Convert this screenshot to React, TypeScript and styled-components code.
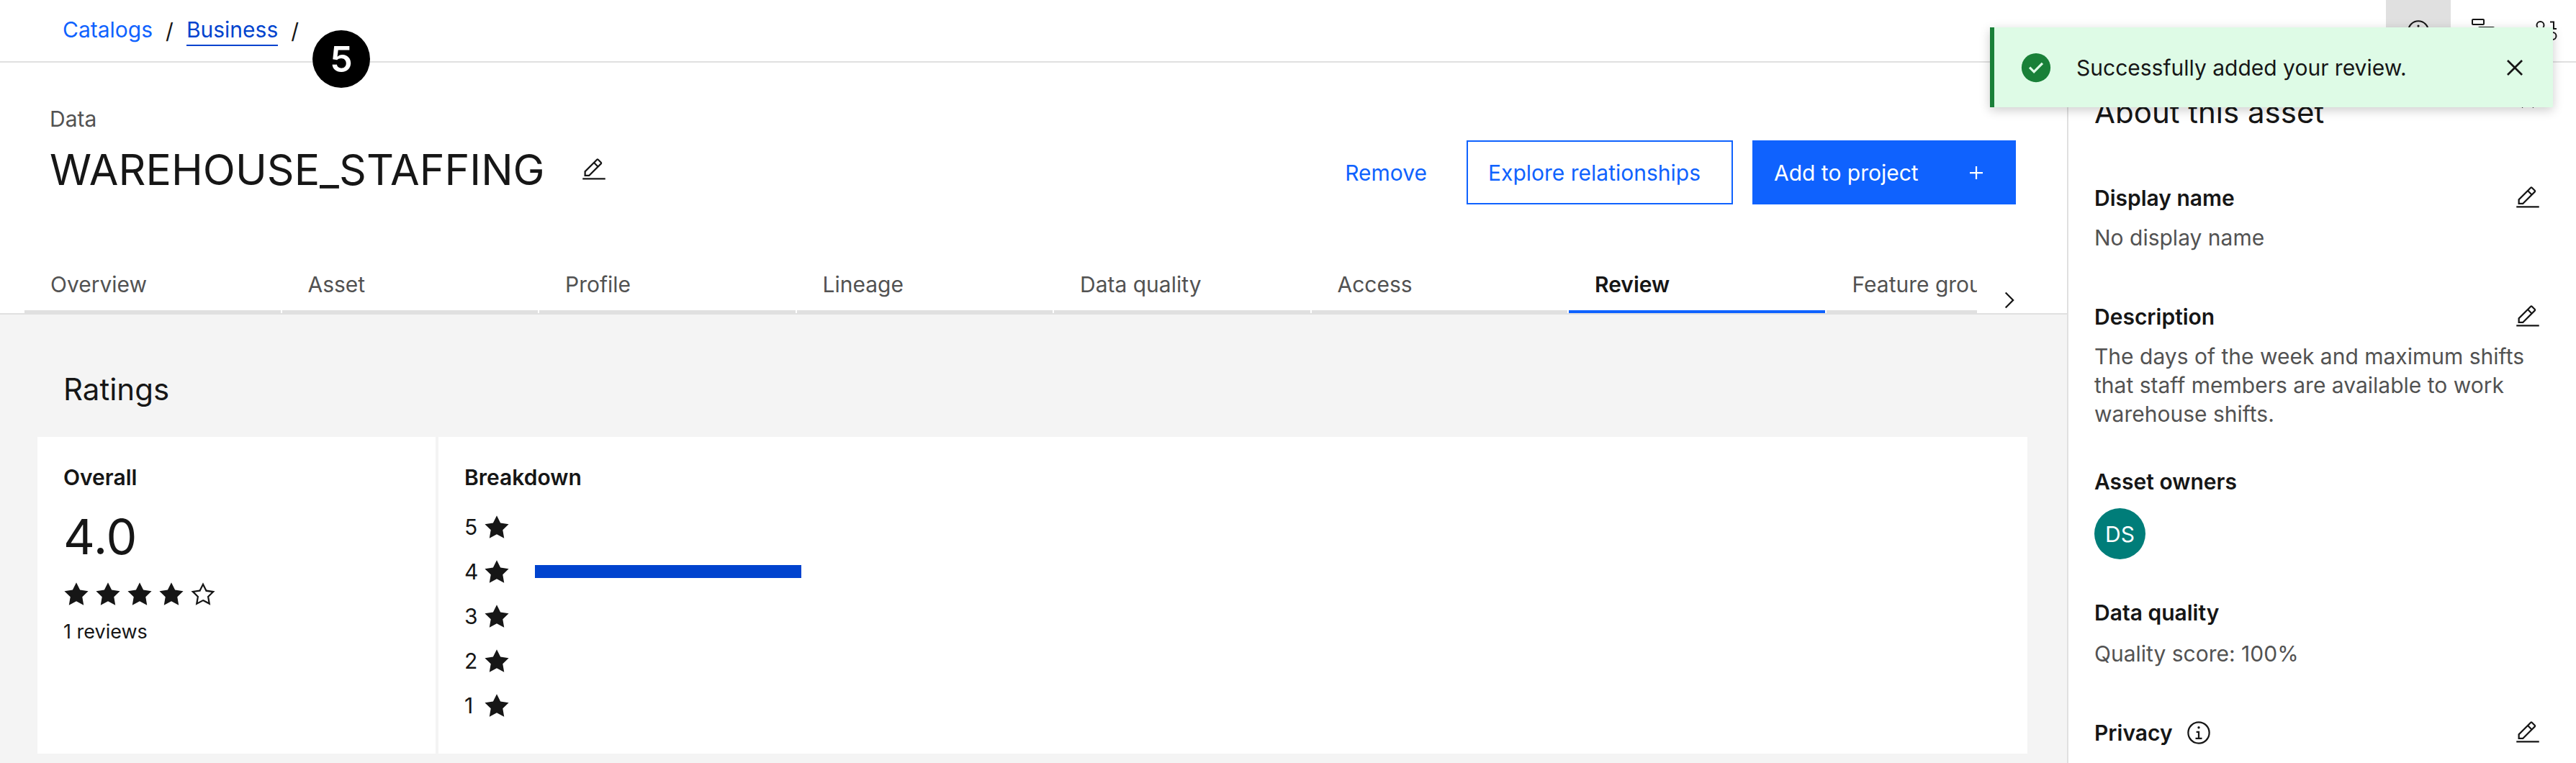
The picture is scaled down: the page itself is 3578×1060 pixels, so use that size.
import React from 'react';
import styled, { createGlobalStyle } from 'styled-components';

const color = {
  text: '#161616',
  muted: '#525252',
  link: '#0f62fe',
  linkHover: '#0043ce',
  border: '#e0e0e0',
  layer: '#f4f4f4',
  success: '#198038',
  successBg: '#defbe6',
  teal: '#007d79',
};

const GlobalStyle = createGlobalStyle`
  *, *::before, *::after { box-sizing: border-box; }
  body {
    margin: 0;
    overflow: hidden;
    background: #fff;
    color: ${color.text};
    font-family: Inter, "Liberation Sans", sans-serif;
    font-size: 30px;
    line-height: 40px;
  }
  h1, h2, h3, p, ol, ul { margin: 0; padding: 0; }
  ol, ul { list-style: none; }
  button {
    border: 0;
    padding: 0;
    background: none;
    color: inherit;
    font: inherit;
    cursor: pointer;
  }
  svg { display: block; flex: none; }
`;

/* ---------- icons ---------- */

const paths = {
  edit: 'M2 26h28v2H2zM25.4 9c.8-.8.8-2 0-2.8l-3.6-3.6c-.8-.8-2-.8-2.8 0l-15 15V24h6.4l15-15zm-5-5L24 7.6l-3 3L17.4 7l3-3zM6 22v-3.6l10-10 3.6 3.6-10 10H6z',
  add: 'M17 15V8h-2v7H8v2h7v7h2v-7h7v-2z',
  close: 'M24 9.4L22.6 8 16 14.6 9.4 8 8 9.4l6.6 6.6L8 22.6 9.4 24l6.6-6.6 6.6 6.6 1.4-1.4-6.6-6.6z',
  chevron: 'M22 16L12 26l-1.4-1.4 8.6-8.6-8.6-8.6L12 6z',
  star: 'M16 2l-4.55 9.22-10.17 1.47 7.36 7.18L6.9 30l9.1-4.78L25.1 30l-1.74-10.13 7.36-7.17-10.17-1.48z',
  starOutline:
    'M16 6.52l2.76 5.58.46 1 1 .15 6.16.89-4.38 4.3-.75.73.18 1 1.05 6.13-5.51-2.89L16 23l-.93.49-5.51 2.85 1-6.13.18-1-.74-.77-4.42-4.35 6.16-.89 1-.15.46-1L16 6.52M16 2l-4.55 9.22-10.17 1.47 7.36 7.18L6.9 30l9.1-4.78L25.1 30l-1.74-10.13 7.36-7.17-10.17-1.48L16 2z',
  info: 'M17 22v-8h-4v2h2v6h-3v2h8v-2zM16 8a1.5 1.5 0 1 0 0 3 1.5 1.5 0 0 0 0-3zM16 30a14 14 0 1 1 14-14 14 14 0 0 1-14 14zm0-26a12 12 0 1 0 12 12A12 12 0 0 0 16 4z',
};

function Icon({ name, size = 36 }: { name: keyof typeof paths; size?: number }) {
  return (
    <svg width={size} height={size} viewBox="0 0 32 32" fill="currentColor" aria-hidden="true">
      <path d={paths[name]} />
    </svg>
  );
}

function SuccessIcon() {
  return (
    <svg width="46" height="46" viewBox="0 0 32 32" aria-hidden="true">
      <circle cx="16" cy="16" r="14" fill={color.success} />
      <path d="M14 21.6l-5-5L10.6 15l3.4 3.4 7.4-7.4 1.6 1.6z" fill={color.successBg} />
    </svg>
  );
}

function FlowIcon() {
  return (
    <svg width="34" height="34" viewBox="0 0 34 34" fill="none" stroke="currentColor" strokeWidth="2" aria-hidden="true">
      <rect x="2" y="1" width="16" height="7" rx="1" />
      <rect x="11" y="12" width="21" height="8" rx="1" />
      <rect x="2" y="24" width="16" height="7" rx="1" />
    </svg>
  );
}

function BinaryIcon() {
  return (
    <svg width="34" height="34" viewBox="0 0 34 34" fill="none" stroke="currentColor" strokeWidth="2" aria-hidden="true">
      <circle cx="6.5" cy="9" r="5" />
      <path d="M20 4.500h5v9.500M19 14h10" />
      <circle cx="23.500" cy="24" r="5" />
      <path d="M2 19.500h5V29M1 29h11" />
    </svg>
  );
}

/* ---------- top bar ---------- */

const TopBar = styled.header`
  display: flex;
  justify-content: space-between;
  border-bottom: 2px solid ${color.border};
`;

const Crumbs = styled.ol`
  display: flex;
  align-items: center;
  height: 85px;
  padding-left: 87px;
`;

const Crumb = styled.li`
  display: flex;
  align-items: center;

  &::after {
    content: '/';
    padding: 0 18px;
  }
`;

const CrumbLink = styled.a<{ $active?: boolean }>`
  padding-bottom: 1px;
  border-bottom: 2px solid ${p => (p.$active ? color.linkHover : 'transparent')};
  color: ${p => (p.$active ? color.linkHover : color.link)};
  text-decoration: none;
`;

const Tools = styled.div`
  display: flex;
  margin-right: -6px;
`;

const ToolButton = styled.button<{ $active?: boolean }>`
  display: flex;
  align-items: center;
  justify-content: center;
  width: 90px;
  height: 85px;
  background: ${p => (p.$active ? color.border : 'transparent')};
`;

const StepBadge = styled.div`
  position: absolute;
  top: 42px;
  left: 434px;
  display: flex;
  align-items: center;
  justify-content: center;
  width: 80px;
  height: 80px;
  border-radius: 50%;
  background: #000;
  color: #fff;
  font-size: 50px;
  font-weight: 600;
`;

/* ---------- page ---------- */

const Page = styled.div`
  display: flex;
  flex-direction: column;
  min-height: 100vh;
`;

const Body = styled.div`
  flex: 1;
  display: grid;
  grid-template-columns: minmax(0, 1fr) 707px;
`;

const Main = styled.main`
  display: flex;
  flex-direction: column;
`;

const AssetHeader = styled.div`
  display: flex;
  align-items: flex-end;
  justify-content: space-between;
  padding: 58px 71px 74px 69px;
`;

const AssetTitle = styled.div`
  display: flex;
  flex-direction: column;
  gap: 12px;
  padding-bottom: 9px;
`;

const AssetKind = styled.p`
  color: ${color.muted};
`;

const TitleRow = styled.div`
  display: flex;
  align-items: center;
  gap: 50px;
`;

const Title = styled.h1`
  font-size: 59px;
  line-height: 78px;
  font-weight: 400;
`;

const Actions = styled.div`
  display: flex;
  gap: 27px;
`;

const buttonWidth = { ghost: 0, outline: 370, primary: 366 };

const Button = styled.button<{ $kind: keyof typeof buttonWidth }>`
  display: flex;
  align-items: center;
  justify-content: space-between;
  min-width: ${p => buttonWidth[p.$kind]}px;
  height: 89px;
  padding: 0 ${p => (p.$kind === 'ghost' ? 26 : 35)}px 0 28px;
  border: 2px solid ${p => (p.$kind === 'ghost' ? 'transparent' : color.link)};
  background: ${p => (p.$kind === 'primary' ? color.link : 'transparent')};
  color: ${p => (p.$kind === 'primary' ? '#fff' : color.link)};
`;

/* ---------- tabs ---------- */

const TabBar = styled.div`
  display: flex;
  align-items: flex-end;
  padding: 0 35px 0 34px;
  border-bottom: 2px solid ${color.border};
`;

const TabViewport = styled.div`
  flex: 1;
  min-width: 0;
  overflow: hidden;
`;

const TabList = styled.div`
  display: grid;
  grid-template-columns: repeat(8, 1fr);
  column-gap: 2px;
  width: 2858px;
`;

const Tab = styled.button<{ $active: boolean }>`
  height: 77px;
  padding: 0 36px;
  border-bottom: 4px solid ${p => (p.$active ? color.link : color.border)};
  color: ${p => (p.$active ? color.text : color.muted)};
  font-weight: ${p => (p.$active ? 600 : 400)};
  text-align: left;
  white-space: nowrap;
`;

const TabScroll = styled.button`
  display: flex;
  justify-content: center;
  width: 90px;
`;

/* ---------- ratings ---------- */

const Content = styled.section`
  flex: 1;
  padding: 74px 55px 12px 52px;
  background: ${color.layer};
`;

const SectionTitle = styled.h2`
  padding: 0 36px 36px;
  font-size: 42px;
  line-height: 60px;
  font-weight: 400;
`;

const Cards = styled.div`
  display: grid;
  grid-template-columns: 553px 1fr;
  gap: 4px;
`;

const Card = styled.div`
  padding: 36px;
  background: #fff;
`;

const CardTitle = styled.h3`
  margin-bottom: 18px;
  font-size: 30px;
  font-weight: 600;
`;

const Summary = styled.div`
  display: flex;
  flex-direction: column;
  gap: 18px;
`;

const Score = styled.p`
  font-size: 68px;
  line-height: 88px;
`;

const Stars = styled.div`
  display: flex;
  gap: 8px;
`;

const ReviewCount = styled.p`
  font-size: 27px;
  line-height: 34px;
`;

const BreakdownRow = styled.li`
  display: flex;
  align-items: center;
  height: 62px;
`;

const BreakdownLabel = styled.span`
  width: 27px;
`;

const Track = styled.div`
  width: 370px;
  height: 18px;
  margin-left: 35px;
`;

const Fill = styled.div`
  height: 100%;
  background: ${color.linkHover};
`;

/* ---------- side panel ---------- */

const Panel = styled.aside`
  padding: 36px 49px 0 36px;
  border-left: 2px solid ${color.border};
`;

const PanelHeader = styled.div`
  display: flex;
  align-items: flex-start;
  justify-content: space-between;
  padding-bottom: 50px;
`;

const PanelTitle = styled.h2`
  font-size: 42px;
  line-height: 66px;
  font-weight: 400;
`;

const Sections = styled.div`
  display: flex;
  flex-direction: column;
  gap: 54px;
`;

const HeadingRow = styled.div<{ $editable: boolean }>`
  display: flex;
  align-items: center;
  justify-content: space-between;
  height: ${p => (p.$editable ? 71 : 57)}px;
  padding-bottom: ${p => (p.$editable ? 0 : 17)}px;
`;

const Heading = styled.h3`
  display: flex;
  align-items: center;
  gap: 18px;
  font-size: 30px;
  font-weight: 600;
`;

const Value = styled.p`
  color: ${color.muted};
`;

const Avatar = styled.div`
  display: flex;
  align-items: center;
  justify-content: center;
  width: 71px;
  height: 71px;
  border-radius: 50%;
  background: ${color.teal};
  color: #fff;
`;

/* ---------- toast ---------- */

const Toast = styled.div`
  position: absolute;
  top: 38px;
  right: 32px;
  display: flex;
  align-items: center;
  gap: 33px;
  width: 782px;
  height: 111px;
  padding: 0 31px 0 35px;
  border-left: 6px solid ${color.success};
  background: ${color.successBg};
  box-shadow: 0 4px 14px rgba(0, 0, 0, 0.2);
`;

const ToastText = styled.p`
  flex: 1;
`;

const tabs = ['Overview', 'Asset', 'Profile', 'Lineage', 'Data quality', 'Access', 'Review', 'Feature group'];
const breakdown = [
  { stars: 5, count: 0 },
  { stars: 4, count: 1 },
  { stars: 3, count: 0 },
  { stars: 2, count: 0 },
  { stars: 1, count: 0 },
];
const total = breakdown.reduce((sum, row) => sum + row.count, 0);
const average = breakdown.reduce((sum, row) => sum + row.stars * row.count, 0) / total;

interface PanelSectionProps {
  title: string;
  editable?: boolean;
  hint?: boolean;
  children?: React.ReactNode;
}

function PanelSection({ title, editable = false, hint = false, children }: PanelSectionProps) {
  return (
    <section>
      <HeadingRow $editable={editable}>
        <Heading>
          {title}
          {hint && <button aria-label="More information"><Icon name="info" /></button>}
        </Heading>
        {editable && <button aria-label={`Edit ${title}`}><Icon name="edit" /></button>}
      </HeadingRow>
      {children}
    </section>
  );
}

export default function App() {
  return (
    <Page>
      <GlobalStyle />
      <TopBar>
        <nav aria-label="Breadcrumb">
          <Crumbs>
            <Crumb><CrumbLink href="#catalogs">Catalogs</CrumbLink></Crumb>
            <Crumb><CrumbLink href="#business" $active>Business</CrumbLink></Crumb>
          </Crumbs>
        </nav>
        <Tools>
          <ToolButton $active aria-label="About this asset"><Icon name="info" size={34} /></ToolButton>
          <ToolButton aria-label="Activity"><FlowIcon /></ToolButton>
          <ToolButton aria-label="Data classes"><BinaryIcon /></ToolButton>
        </Tools>
      </TopBar>

      <Body>
        <Main>
          <AssetHeader>
            <AssetTitle>
              <AssetKind>Data</AssetKind>
              <TitleRow>
                <Title>WAREHOUSE_STAFFING</Title>
                <button aria-label="Edit name"><Icon name="edit" /></button>
              </TitleRow>
            </AssetTitle>
            <Actions>
              <Button $kind="ghost">Remove</Button>
              <Button $kind="outline">Explore relationships</Button>
              <Button $kind="primary">Add to project<Icon name="add" /></Button>
            </Actions>
          </AssetHeader>

          <TabBar>
            <TabViewport>
              <TabList role="tablist">
                {tabs.map(name => (
                  <Tab key={name} role="tab" aria-selected={name === 'Review'} $active={name === 'Review'}>
                    {name}
                  </Tab>
                ))}
              </TabList>
            </TabViewport>
            <TabScroll aria-label="Scroll tabs right"><Icon name="chevron" /></TabScroll>
          </TabBar>

          <Content>
            <SectionTitle>Ratings</SectionTitle>
            <Cards>
              <Card>
                <CardTitle>Overall</CardTitle>
                <Summary>
                  <Score>{average.toFixed(1)}</Score>
                  <Stars role="img" aria-label={`${average} out of 5 stars`}>
                    {[1, 2, 3, 4, 5].map(n => (
                      <Icon key={n} name={n <= average ? 'star' : 'starOutline'} />
                    ))}
                  </Stars>
                  <ReviewCount>{total} reviews</ReviewCount>
                </Summary>
              </Card>
              <Card>
                <CardTitle>Breakdown</CardTitle>
                <ul>
                  {breakdown.map(row => (
                    <BreakdownRow key={row.stars}>
                      <BreakdownLabel>{row.stars}</BreakdownLabel>
                      <Icon name="star" />
                      <Track>
                        <Fill style={{ width: `${(row.count / total) * 100}%` }} />
                      </Track>
                    </BreakdownRow>
                  ))}
                </ul>
              </Card>
            </Cards>
          </Content>
        </Main>

        <Panel>
          <PanelHeader>
            <PanelTitle>About this asset</PanelTitle>
            <button aria-label="Close panel"><Icon name="close" /></button>
          </PanelHeader>
          <Sections>
            <PanelSection title="Display name" editable>
              <Value>No display name</Value>
            </PanelSection>
            <PanelSection title="Description" editable>
              <Value>
                The days of the week and maximum shifts that staff members are available to work warehouse shifts.
              </Value>
            </PanelSection>
            <PanelSection title="Asset owners">
              <Avatar>DS</Avatar>
            </PanelSection>
            <PanelSection title="Data quality">
              <Value>Quality score: 100%</Value>
            </PanelSection>
            <PanelSection title="Privacy" editable hint />
          </Sections>
        </Panel>
      </Body>

      <StepBadge>5</StepBadge>
      <Toast role="status">
        <SuccessIcon />
        <ToastText>Successfully added your review.</ToastText>
        <button aria-label="Dismiss"><Icon name="close" size={44} /></button>
      </Toast>
    </Page>
  );
}
